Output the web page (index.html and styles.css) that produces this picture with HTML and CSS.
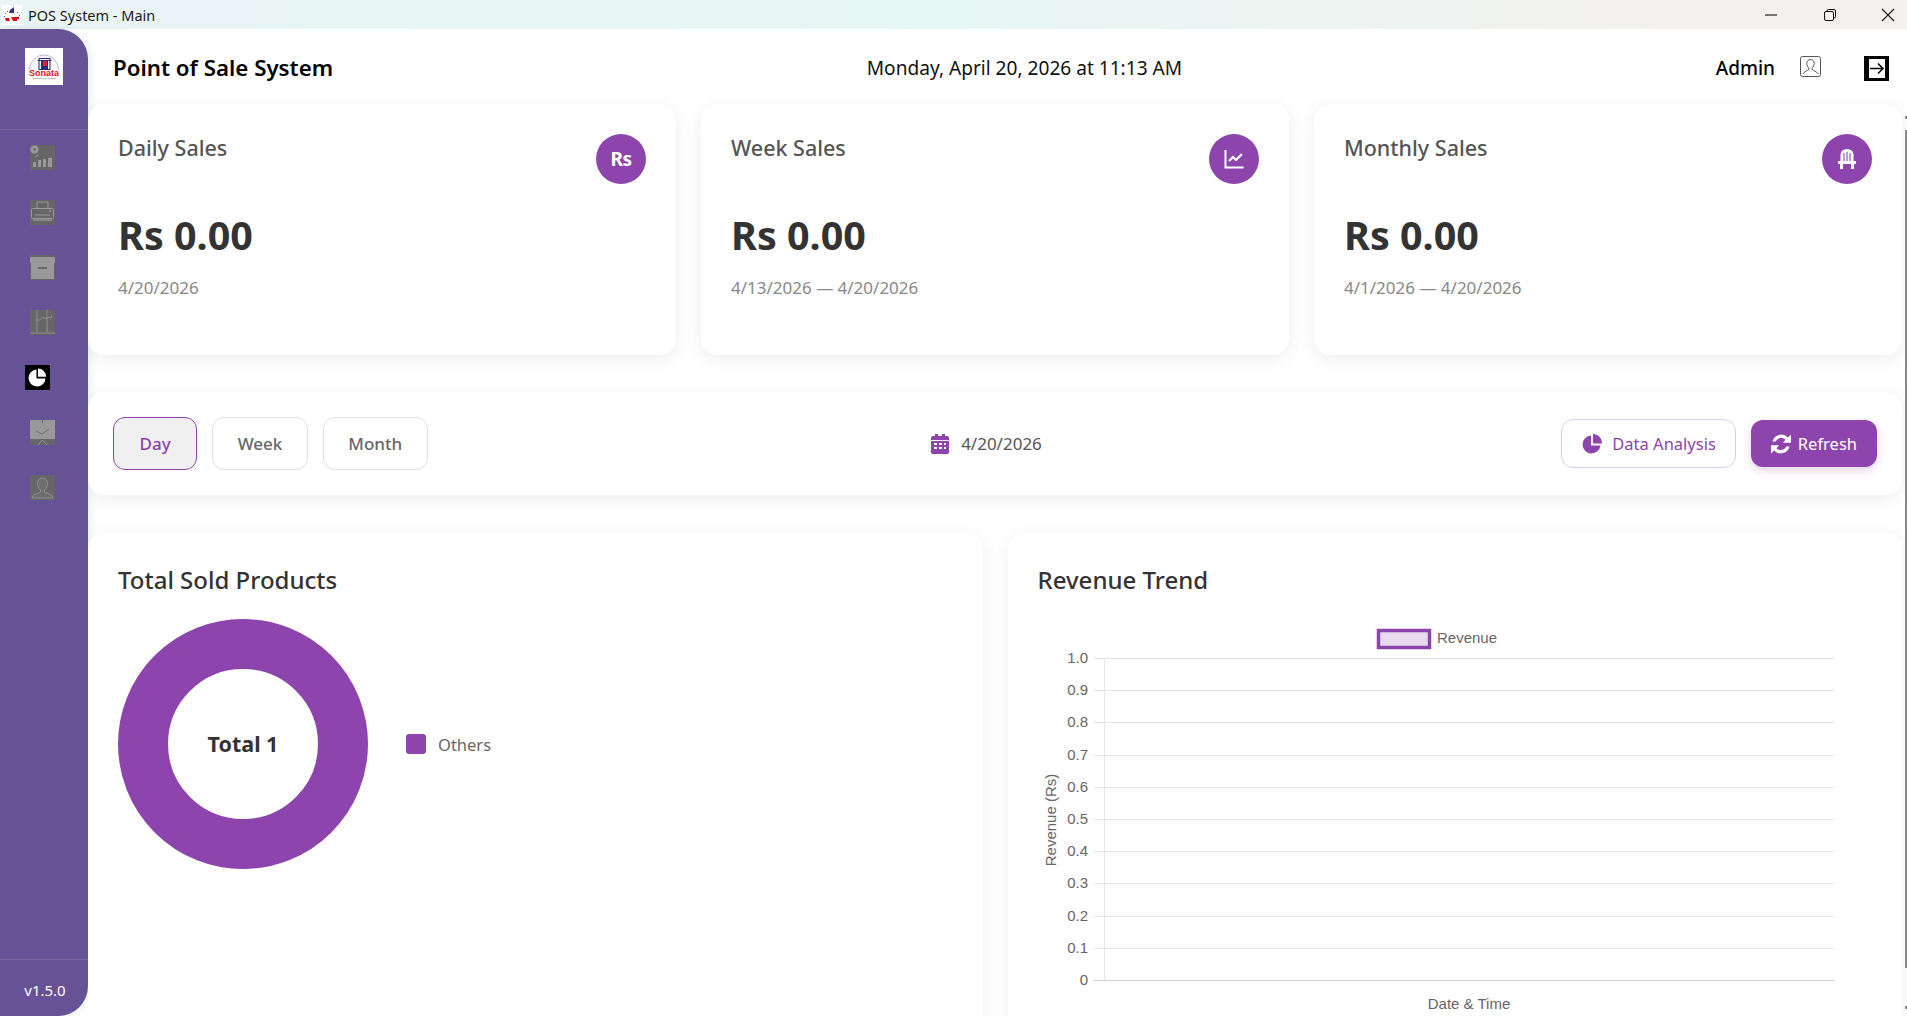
FILE: index.html
```html
<!DOCTYPE html>
<html lang="en">
<head>
<meta charset="UTF-8" />
<title>POS System - Main</title>
<link rel="stylesheet" href="styles.css">
</head>
<body>
<!-- Window title bar -->
<div class="titlebar">
  <svg class="app-icon" viewBox="0 0 20 20">
    <rect width="20" height="20" fill="#fff"/>
    <path d="M8 5l4-3v6H7z" fill="#33308f"/>
    <path d="M3 13h4l1 3H4zM9 12h8v2h-2v2h-4z" fill="#e0101a"/>
    <path d="M3 8h1v1H3zM5 6h1v1H5zM15 7h1v1h-1zM17 10h1v1h-1zM2 11h1v1H2z" fill="#7a3aa0"/>
  </svg>
  <span class="app-name">POS System - Main</span>
  <div class="win-btns">
    <svg viewBox="0 0 16 16"><path d="M2 8h12" stroke="#111" stroke-width="1.1"/></svg>
    <svg viewBox="0 0 16 16"><rect x="2.5" y="4.5" width="9" height="9" rx="1.5" fill="none" stroke="#111"/><path d="M5 4.5V4a1.5 1.5 0 0 1 1.5-1.5H12A1.5 1.5 0 0 1 13.500 4v5.500A1.500 1.500 0 0 1 12 11h-.5" fill="none" stroke="#111"/></svg>
    <svg viewBox="0 0 16 16"><path d="M2 2l12 12M14 2L2 14" stroke="#111" stroke-width="1.1"/></svg>
  </div>
</div>

<div class="app">
  <aside class="sidebar">
    <div class="logo-wrap">
      <svg class="logo" viewBox="0 0 38 37">
        <rect width="38" height="37" fill="#fff"/>
        <path d="M4.500 22A14.500 15 0 0 1 33.500 22" fill="none" stroke="#a98bd0" stroke-width=".7"/>
        <path d="M14 10.500h11v11H14zM12.500 12.500h14" fill="none" stroke="#2d2a7d" stroke-width="1.100"/>
        <path d="M16 12h7v9h-7z" fill="#2d2a7d"/>
        <path d="M18 13h4v5h-4z" fill="#d9232e"/>
        <text x="19" y="27.500" class="logo-text">Sonata</text>
        <text x="19" y="31" class="logo-sub">COMMUNICATIONS</text>
      </svg>
    </div>
    <nav class="nav">
      <a class="nav-item"><svg viewBox="0 0 25 25"><rect width="25" height="25" fill="#666"/><circle cx="4.500" cy="4.500" r="4" fill="#999"/><circle cx="4.500" cy="4.500" r="1.200" fill="#666"/><path d="M5 12l4-2" stroke="#999" stroke-width="1"/><path d="M3 17h3v5H3zM8 15h3v7H8zM13 14h3v8h-3zM18 13h4v9h-4z" fill="#999"/></svg></a>
      <a class="nav-item"><svg viewBox="0 0 25 25"><rect width="25" height="25" fill="#666"/><path d="M7 8V2h11v6" fill="none" stroke="#999"/><rect x="1.500" y="8.500" width="22" height="10" rx="1" fill="none" stroke="#999"/><path d="M5 15h15" stroke="#999"/><path d="M3 19h19v2H3z" fill="#888"/><circle cx="20" cy="11" r="1" fill="#999"/></svg></a>
      <a class="nav-item"><svg viewBox="0 0 25 25"><rect width="25" height="25" fill="#666"/><path d="M0 2h25v6H0z" fill="#999"/><path d="M1 8h23v16H1z" fill="#999"/><path d="M8 12h9v2H8z" fill="#666"/></svg></a>
      <a class="nav-item"><svg viewBox="0 0 25 25"><rect width="25" height="25" fill="#666"/><path d="M7 0v22M17 0v22M0 23h25" stroke="#999" stroke-width=".8"/><path d="M6 10h4l3-3 3 2 3-2 2 1 1-3" fill="none" stroke="#999" stroke-width=".8"/></svg></a>
      <a class="nav-item active"><svg viewBox="0 0 25 25"><rect width="25" height="25" fill="#000"/><path d="M11.500 4.500a8.500 8.500 0 1 0 9 9h-9z" fill="#fff"/><path d="M13 3.500a8 8 0 0 1 8 8.200h-8z" fill="#fff"/></svg></a>
      <a class="nav-item"><svg viewBox="0 0 25 25"><rect width="25" height="25" fill="#999"/><path d="M0 19h25v6H0z" fill="#666"/><path d="M12.500 0v3" stroke="#666"/><path d="M6 11l6 3 7-5" fill="none" stroke="#666" stroke-width=".9"/><path d="M8 25l4.500-5 4.500 5" fill="none" stroke="#999"/></svg></a>
      <a class="nav-item"><svg viewBox="0 0 25 25"><rect width="25" height="25" fill="#666"/><path d="M12.500 3c-3 0-5 2-5 5.500 0 3 1.500 5 3 6.500v2c-2 1.500-6 1.500-8 4v2h20v-2c-2-2.500-6-2.500-8-4v-2c1.500-1.500 3-3.500 3-6.500C17.500 5 15.500 3 12.500 3z" fill="#6e6e6e" stroke="#999" stroke-width=".8"/></svg></a>
    </nav>
    <div class="version">v1.5.0</div>
  </aside>

  <main class="main">
    <header class="header">
      <h1 class="page-title">Point of Sale System</h1>
      <div class="clock">Monday, April 20, 2026 at 11:13 AM</div>
      <div class="user">
        <span class="user-name">Admin</span>
        <svg class="user-icon" viewBox="0 0 21 21"><rect x=".5" y=".5" width="20" height="20" rx="2" fill="none" stroke="#555"/><path d="M10.500 3.500c-2.300 0-3.700 1.700-3.700 4 0 2 1 3.500 2 4.500v1.500c-1.500 1.300-4 1.500-6 4.500M10.500 3.500c2.300 0 3.700 1.700 3.700 4 0 2-1 3.500-2 4.500v1.500c1.500 1.300 4 1.500 6 4.500" fill="none" stroke="#444" stroke-width=".9"/></svg>
        <svg class="logout-icon" viewBox="0 0 25 25"><rect width="25" height="25" fill="#000"/><rect x="5" y="3" width="16" height="19" fill="#fff"/><path d="M6 12.500h13M14 7.500l5 5-5 5" fill="none" stroke="#000" stroke-width="1.500"/></svg>
      </div>
    </header>

    <section class="cards">
      <div class="card">
        <div class="card-top">
          <span class="card-label">Daily Sales</span>
          <span class="card-icon rs">Rs</span>
        </div>
        <div class="card-value">Rs 0.00</div>
        <div class="card-date">4/20/2026</div>
      </div>
      <div class="card">
        <div class="card-top">
          <span class="card-label">Week Sales</span>
          <span class="card-icon"><svg viewBox="0 0 20 20"><path d="M1.500 1v17.500h18" fill="none" stroke="#fff" stroke-width="2"/><path d="M5 12l4-4 3 3 6-6" fill="none" stroke="#fff" stroke-width="2.200"/></svg></span>
        </div>
        <div class="card-value">Rs 0.00</div>
        <div class="card-date">4/13/2026 — 4/20/2026</div>
      </div>
      <div class="card">
        <div class="card-top">
          <span class="card-label">Monthly Sales</span>
          <span class="card-icon"><svg viewBox="0 0 20 20"><path d="M3.500 12V5.500a6.500 5.500 0 0 1 13 0V12z" fill="#fff"/><path d="M7 4v8M10 3v9M13 4v8" stroke="#8e44ad" stroke-width="1.100"/><path d="M1 12h18v3H1zM3 15h3v5H3zM14 15h3v5h-3z" fill="#fff"/></svg></span>
        </div>
        <div class="card-value">Rs 0.00</div>
        <div class="card-date">4/1/2026 — 4/20/2026</div>
      </div>
    </section>

    <section class="filter-bar">
      <div class="range-btns">
        <button class="range-btn active">Day</button>
        <button class="range-btn">Week</button>
        <button class="range-btn">Month</button>
      </div>
      <div class="selected-date">
        <svg viewBox="0 0 18 20"><path d="M0 7h18v11a2 2 0 0 1-2 2H2a2 2 0 0 1-2-2zM2 2h2V0h3v2h4V0h3v2h2a2 2 0 0 1 2 2v2H0V4a2 2 0 0 1 2-2z" fill="#8e44ad"/><path d="M3 9h3v2H3zM8 9h3v2H8zM13 9h2v2h-2zM3 13h3v2H3zM8 13h3v2H8zM13 13h2v2h-2z" fill="#fff"/></svg>
        <span>4/20/2026</span>
      </div>
      <div class="action-btns">
        <button class="btn-outline"><svg viewBox="0 0 20 20"><path d="M9 1.500a9 9 0 1 0 9.500 10H9z" fill="#8e44ad"/><path d="M11 0a9 9 0 0 1 9 9.500h-9z" fill="#8e44ad"/></svg>Data Analysis</button>
        <button class="btn-solid"><svg viewBox="2 2 16 16"><path d="M3.200 8A7.200 7.200 0 0 1 15.500 4.800L18 2.500V9h-6.500l2.200-2.300A4.800 4.800 0 0 0 5.800 8zM16.800 12A7.200 7.200 0 0 1 4.500 15.200L2 17.500V11h6.500l-2.200 2.300A4.800 4.800 0 0 0 14.200 12z" fill="#fff"/></svg>Refresh</button>
      </div>
    </section>

    <section class="charts">
      <div class="chart-card">
        <h2 class="chart-title">Total Sold Products</h2>
        <div class="donut-row">
          <div class="donut"><span>Total 1</span></div>
          <div class="legend"><i class="legend-swatch"></i>Others</div>
        </div>
      </div>
      <div class="chart-card">
        <h2 class="chart-title">Revenue Trend</h2>
        <svg class="trend" viewBox="0 0 834 420" width="834" height="420">
          <rect x="340.500" y="15.500" width="51" height="17" fill="#e8dbef" stroke="#8e44ad" stroke-width="3.500"/>
          <text x="399" y="28" class="tick">Revenue</text>
          <g class="grid">
            <path d="M56 43.500H796M56 75.500H796M56 107.500H796M56 140.500H796M56 172.500H796M56 204.500H796M56 236.500H796M56 268.500H796M56 301.500H796M56 333.500H796"/>
            <path d="M66.500 43V365"/>
          </g>
          <path class="axis" d="M56 365.500H796"/>
          <g class="ticks">
            <text x="50" y="48">1.0</text>
            <text x="50" y="80">0.9</text>
            <text x="50" y="112">0.8</text>
            <text x="50" y="145">0.7</text>
            <text x="50" y="177">0.6</text>
            <text x="50" y="209">0.5</text>
            <text x="50" y="241">0.4</text>
            <text x="50" y="273">0.3</text>
            <text x="50" y="306">0.2</text>
            <text x="50" y="338">0.1</text>
            <text x="50" y="370">0</text>
          </g>
          <text class="tick" text-anchor="middle" transform="translate(18 205) rotate(-90)">Revenue (Rs)</text>
          <text class="tick" text-anchor="middle" x="431" y="394">Date &amp; Time</text>
        </svg>
      </div>
    </section>
  </main>
  <div class="scroll-rail"><i class="scroll-arrow"></i><i class="scroll-thumb"></i><i class="scroll-arrow low"></i></div>
</div>
</body>
</html>
```

FILE: styles.css
```css
:root {
  --purple: #8e44ad;
  --side-bg: #685296;
  --text-dark: #333333;
  --text-mid: #555555;
  --text-soft: #888888;
  --font-family: "Noto Sans", "Open Sans", sans-serif;
}

* {
  box-sizing: border-box;
}

html, body {
  margin: 0;
  height: 100%;
  overflow: hidden;
}

body {
  font-family: var(--font-family);
  background: #fff;
  display: flex;
  flex-direction: column;
}

/* title bar */
.titlebar {
  height: 29px;
  flex: none;
  display: flex;
  align-items: center;
  background: linear-gradient(90deg, #e9f4f5 0%, #e6f6f4 50%, #f4f0ee 90%);
  padding-left: 2px;
}

.app-icon {
  width: 20px;
  height: 20px;
}

.app-name {
  margin-left: 6px;
  font-size: 14.500px;
  color: #1a1a1a;
}

.win-btns {
  margin-left: auto;
  display: flex;
  gap: 42.500px;
  padding-right: 11px;
}

.win-btns svg {
  width: 16px;
  height: 16px;
}

/* layout */
.app {
  flex: 1;
  min-height: 0;
  display: flex;
}

.sidebar {
  width: 88px;
  flex: none;
  background: var(--side-bg);
  border-radius: 0 30px 30px 0;
  box-shadow: 2px 0 8px rgba(0,0,0,0.08);
  display: flex;
  flex-direction: column;
}

.logo-wrap {
  height: 101px;
  flex: none;
  padding: 19px 0 0 25px;
  border-bottom: 1px solid rgba(255,255,255,0.12);
}

.logo {
  display: block;
  width: 38px;
  height: 37px;
}

.logo-text {
  font: bold 9px "Liberation Sans", sans-serif;
  fill: #e0101a;
  text-anchor: middle;
}

.logo-sub {
  font: 2.500px "Liberation Sans", sans-serif;
  fill: #555;
  text-anchor: middle;
}

.nav {
  flex: 1;
  display: flex;
  flex-direction: column;
  gap: 30px;
  padding: 15px 0 0 30px;
}

.nav-item {
  display: block;
  width: 25px;
  height: 25px;
}

.nav-item svg {
  display: block;
  width: 25px;
  height: 25px;
}

.nav-item.active {
  margin-left: -5px;
}

.version {
  height: 57px;
  flex: none;
  border-top: 1px solid rgba(255,255,255,0.12);
  text-align: center;
  padding: 20px 0 0 2px;
  font-size: 15px;
  line-height: 20px;
  color: #fff;
}

.main {
  flex: 1;
  min-width: 0;
  display: flex;
  flex-direction: column;
  overflow: hidden;
}

.scroll-rail {
  width: 5px;
  flex: none;
  margin-left: -5px;
  padding: 87px 0 0 3px;
}

.scroll-arrow {
  display: block;
  width: 2px;
  height: 3px;
  background: #888;
}

.scroll-arrow.low {
  margin-top: 38px;
}

.scroll-thumb {
  display: block;
  width: 2px;
  height: 838px;
  margin-top: 11px;
  background: #888;
}

/* header */
.header {
  height: 75px;
  flex: none;
  display: flex;
  justify-content: space-between;
  align-items: center;
  padding: 2px 18px 0 25px;
}

.page-title {
  margin: 0;
  font-size: 22.300px;
  font-weight: 600;
  color: #000;
}

.clock {
  font-size: 19.100px;
  color: #111;
}

.user {
  display: flex;
  align-items: center;
}

.user-name {
  font-size: 19px;
  font-weight: 500;
  color: #000;
}

.user-icon {
  width: 21px;
  height: 21px;
  margin: -2px 0 0 25px;
}

.logout-icon {
  width: 25px;
  height: 25px;
  margin: 2px 0 0 43px;
}

/* summary cards */
.cards {
  flex: none;
  display: grid;
  grid-template-columns: repeat(3, 1fr);
  gap: 25px;
  padding-right: 5px;
}

.card {
  height: 251px;
  background: #fff;
  border-radius: 16px;
  padding: 30px 30px 0;
  box-shadow: 0 4px 18px rgba(0,0,0,0.07);
}

.card-top {
  display: flex;
  justify-content: space-between;
  align-items: flex-start;
  height: 50px;
}

.card-label {
  font-size: 21.500px;
  font-weight: 500;
  line-height: 28px;
  color: var(--text-mid);
}

.card-icon {
  width: 50px;
  height: 50px;
  border-radius: 50%;
  background: var(--purple);
  color: #fff;
  display: flex;
  align-items: center;
  justify-content: center;
}

.card-icon svg {
  width: 20px;
  height: 20px;
}

.card-icon.rs {
  font-size: 19px;
  font-weight: 700;
  letter-spacing: -0.5px;
}

.card-value {
  margin-top: 26px;
  font-size: 39.500px;
  font-weight: 700;
  line-height: 50px;
  color: var(--text-dark);
}

.card-date {
  margin-top: 16px;
  font-size: 17px;
  line-height: 24px;
  color: var(--text-soft);
}

/* filter bar */
.filter-bar {
  flex: none;
  height: 103px;
  margin: 37px 5px 0 0;
  padding: 0 25px;
  background: #fff;
  border-radius: 16px;
  box-shadow: 0 4px 18px rgba(0,0,0,0.07);
  display: flex;
  justify-content: space-between;
  align-items: center;
}

.range-btns {
  display: flex;
  gap: 15px;
}

.range-btn {
  height: 53px;
  padding: 0 24.500px;
  background: #fff;
  border: 1px solid #e0e0e0;
  border-radius: 12px;
  font: 500 17px var(--font-family);
  color: #666;
}

.range-btn.active {
  padding: 0 25.500px;
  background: #f0f0f0;
  border-color: var(--purple);
  color: var(--purple);
}

.selected-date {
  display: flex;
  align-items: center;
  gap: 12px;
  margin-right: 16px;
  font-size: 17px;
  color: #555;
}

.selected-date svg {
  width: 18px;
  height: 20px;
}

.action-btns {
  display: flex;
  align-items: center;
  gap: 15px;
}

.btn-outline, .btn-solid {
  display: flex;
  align-items: center;
  gap: 10px;
  border-radius: 12px;
  font: 400 16.500px var(--font-family);
}

.btn-outline svg, .btn-solid svg {
  width: 20px;
  height: 20px;
}

.btn-outline {
  height: 49px;
  padding: 0 19px 0 20px;
  background: #fff;
  border: 1.500px solid #e3c8f0;
  color: var(--purple);
}

.btn-solid {
  height: 47px;
  padding: 0 20px;
  gap: 7px;
  background: var(--purple);
  border: none;
  color: #fff;
  box-shadow: 0 3px 8px rgba(142,68,173,0.25);
}

/* charts */
.charts {
  flex: none;
  display: grid;
  grid-template-columns: 1fr 1fr;
  gap: 25px;
  margin: 38px 5px 0 0;
}

.chart-card {
  height: 520px;
  background: #fff;
  border-radius: 16px;
  padding: 30px;
  box-shadow: 0 4px 18px rgba(0,0,0,0.07);
}

.chart-title {
  margin: 0;
  font-size: 24px;
  font-weight: 500;
  line-height: 34px;
  color: var(--text-dark);
}

.donut-row {
  display: flex;
  align-items: center;
  margin-top: 22px;
}

.donut {
  width: 250px;
  height: 250px;
  flex: none;
  border: 50px solid var(--purple);
  border-radius: 50%;
  padding-bottom: 2px;
  display: flex;
  align-items: center;
  justify-content: center;
  font-size: 21.500px;
  font-weight: 700;
  color: var(--text-dark);
}

.legend {
  display: flex;
  align-items: center;
  gap: 12px;
  margin-left: 38px;
  font-size: 16.500px;
  color: #666;
}

.legend-swatch {
  width: 20px;
  height: 20px;
  border-radius: 3px;
  background: var(--purple);
}

.trend {
  display: block;
  margin-top: 18px;
}

.grid path {
  fill: none;
  stroke: #e6e6e6;
}

.axis {
  stroke: #cfcfcf;
  fill: none;
}

.tick, .ticks text {
  font: 15px "Liberation Sans", sans-serif;
  fill: #666;
}

.ticks text {
  text-anchor: end;
}
```
